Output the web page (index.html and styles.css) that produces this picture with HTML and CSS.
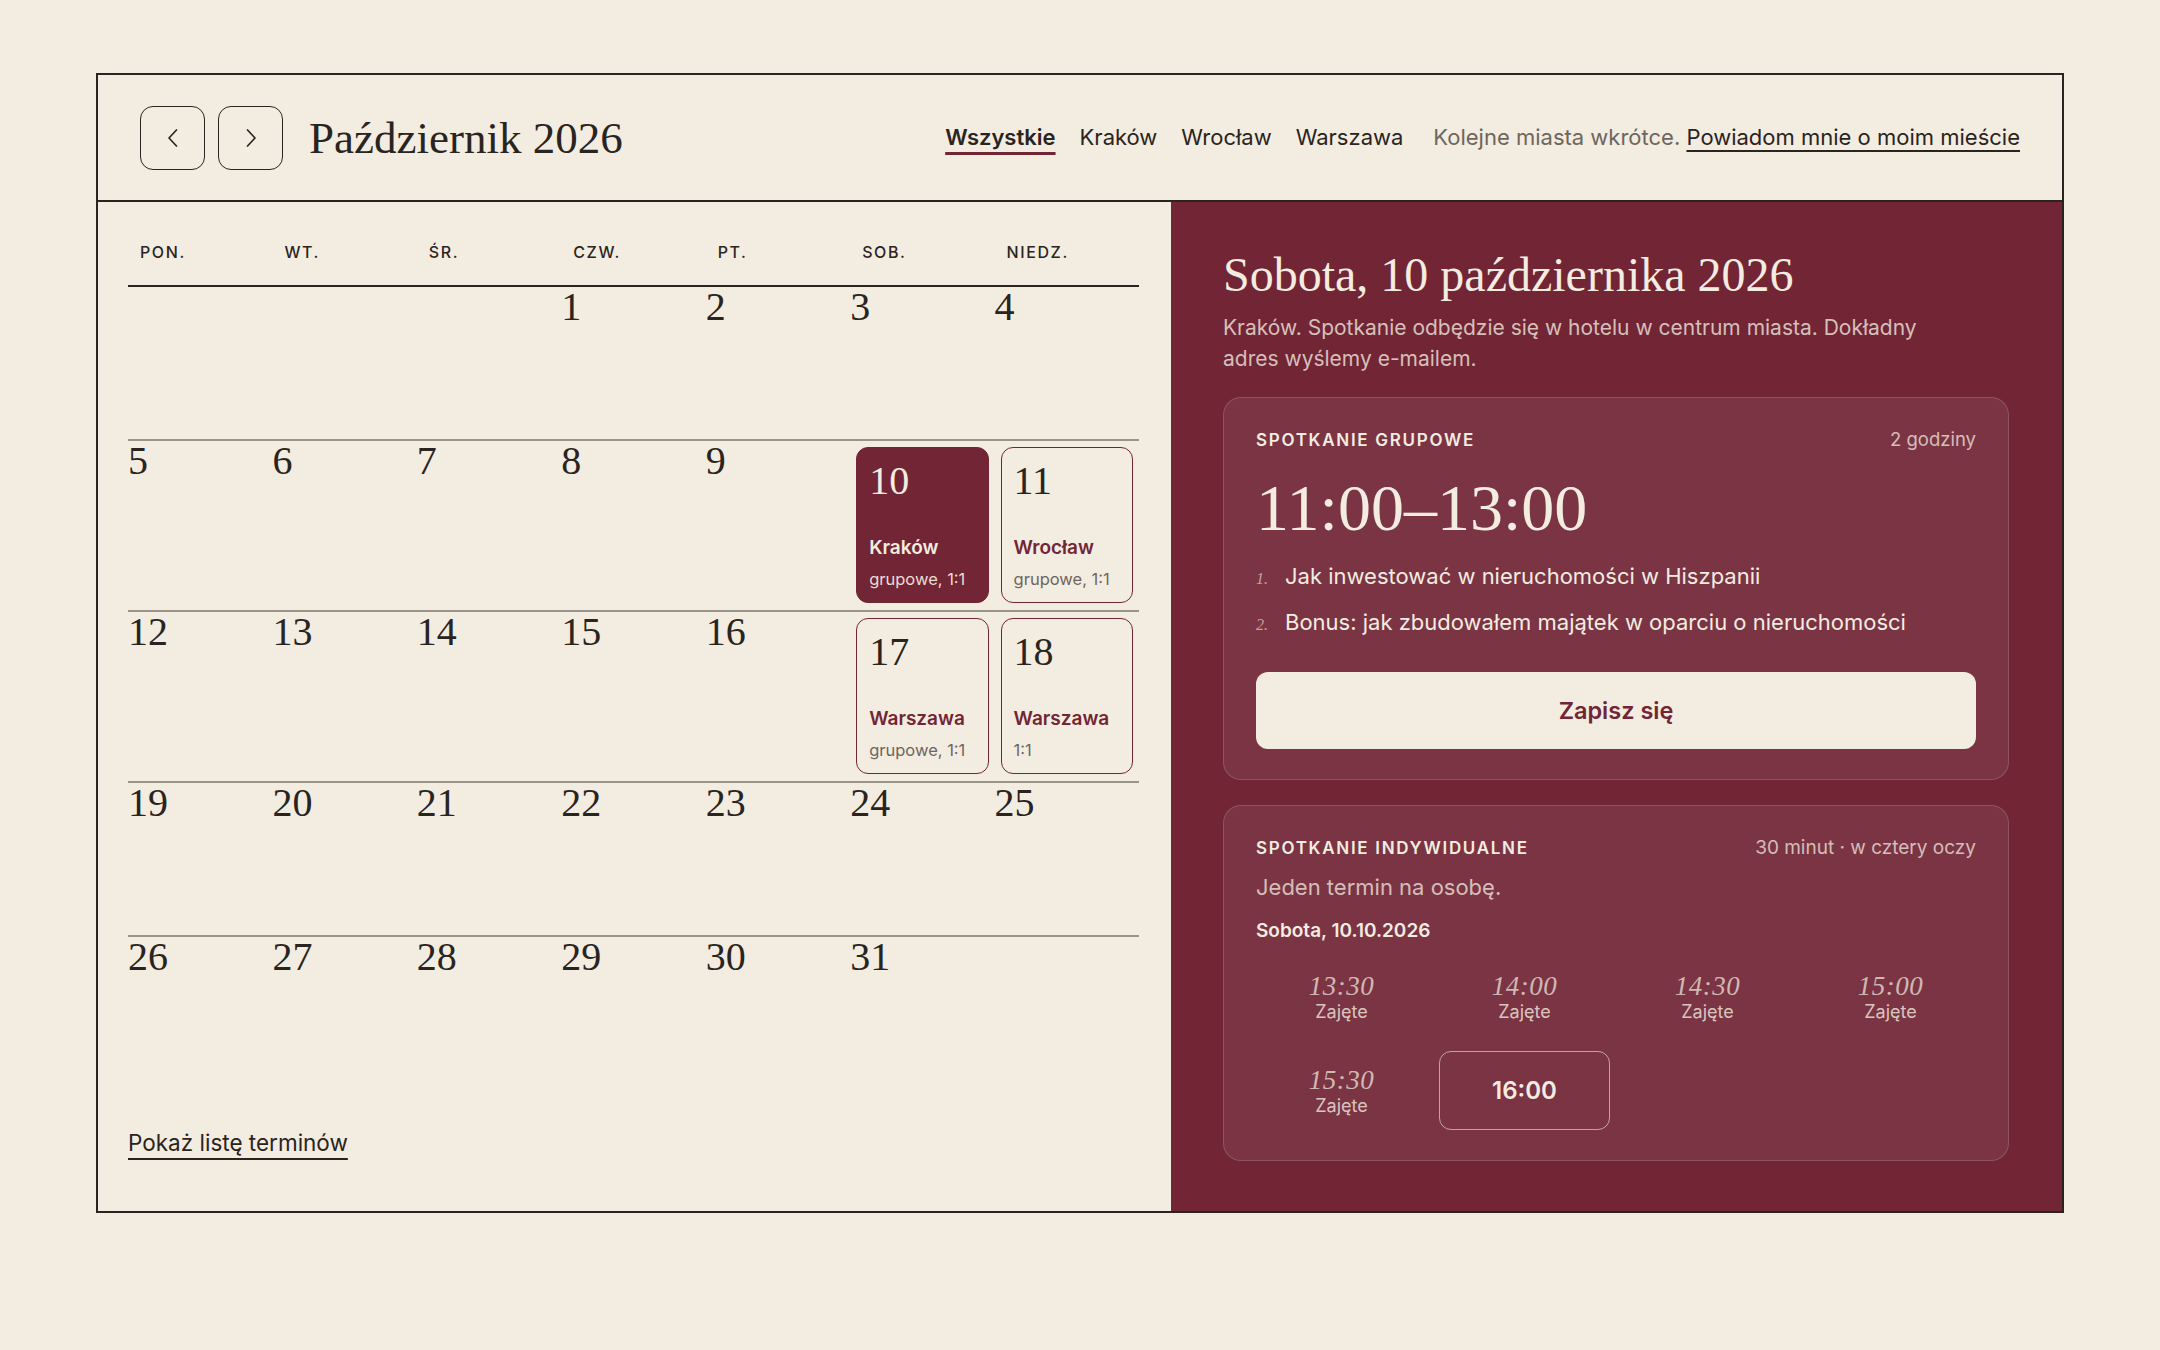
FILE: index.html
```html
<!DOCTYPE html>
<html lang="pl">
<head>
<meta charset="utf-8">
<title>Październik 2026</title>
<link rel="stylesheet" href="styles.css">
</head>
<body>
<div class="page">
  <section class="card">
    <header class="top">
      <button class="nav-btn" aria-label="Poprzedni miesiąc">
        <svg width="20" height="20" viewBox="0 0 20 20"><path d="M13.5 2 L6 10 L13.5 18" fill="none" stroke="#2a2420" stroke-width="1.7" stroke-linecap="round" stroke-linejoin="round"/></svg>
      </button>
      <button class="nav-btn" aria-label="Następny miesiąc">
        <svg width="20" height="20" viewBox="0 0 20 20"><path d="M6.5 2 L14 10 L6.5 18" fill="none" stroke="#2a2420" stroke-width="1.7" stroke-linecap="round" stroke-linejoin="round"/></svg>
      </button>
      <h1 class="month">Październik 2026</h1>
      <nav class="tabs">
        <a class="tab active">Wszystkie</a>
        <a class="tab">Kraków</a>
        <a class="tab">Wrocław</a>
        <a class="tab">Warszawa</a>
        <span class="soon">Kolejne miasta wkrótce. <a class="notify">Powiadom mnie o moim mieście</a></span>
      </nav>
    </header>

    <div class="body">
      <div class="cal">
        <div class="weekdays">
          <div>PON.</div><div>WT.</div><div>ŚR.</div><div>CZW.</div><div>PT.</div><div>SOB.</div><div>NIEDZ.</div>
        </div>
        <div class="grid">
          <div class="cell"></div>
          <div class="cell"></div>
          <div class="cell"></div>
          <div class="cell"><span class="num">1</span></div>
          <div class="cell"><span class="num">2</span></div>
          <div class="cell"><span class="num">3</span></div>
          <div class="cell"><span class="num">4</span></div>

          <div class="cell"><span class="num">5</span></div>
          <div class="cell"><span class="num">6</span></div>
          <div class="cell"><span class="num">7</span></div>
          <div class="cell"><span class="num">8</span></div>
          <div class="cell"><span class="num">9</span></div>
          <div class="cell ev">
            <div class="ev-box selected">
              <span class="num">10</span>
              <span class="city">Kraków</span>
              <span class="type">grupowe, 1:1</span>
            </div>
          </div>
          <div class="cell ev">
            <div class="ev-box">
              <span class="num">11</span>
              <span class="city">Wrocław</span>
              <span class="type">grupowe, 1:1</span>
            </div>
          </div>

          <div class="cell"><span class="num">12</span></div>
          <div class="cell"><span class="num">13</span></div>
          <div class="cell"><span class="num">14</span></div>
          <div class="cell"><span class="num">15</span></div>
          <div class="cell"><span class="num">16</span></div>
          <div class="cell ev">
            <div class="ev-box">
              <span class="num">17</span>
              <span class="city">Warszawa</span>
              <span class="type">grupowe, 1:1</span>
            </div>
          </div>
          <div class="cell ev">
            <div class="ev-box">
              <span class="num">18</span>
              <span class="city">Warszawa</span>
              <span class="type">1:1</span>
            </div>
          </div>

          <div class="cell"><span class="num">19</span></div>
          <div class="cell"><span class="num">20</span></div>
          <div class="cell"><span class="num">21</span></div>
          <div class="cell"><span class="num">22</span></div>
          <div class="cell"><span class="num">23</span></div>
          <div class="cell"><span class="num">24</span></div>
          <div class="cell"><span class="num">25</span></div>

          <div class="cell"><span class="num">26</span></div>
          <div class="cell"><span class="num">27</span></div>
          <div class="cell"><span class="num">28</span></div>
          <div class="cell"><span class="num">29</span></div>
          <div class="cell"><span class="num">30</span></div>
          <div class="cell"><span class="num">31</span></div>
          <div class="cell"></div>
        </div>
        <div class="foot"><a class="list-link">Pokaż listę terminów</a></div>
      </div>

      <aside class="detail">
        <h2 class="day-title">Sobota, 10 października 2026</h2>
        <p class="day-sub">Kraków. Spotkanie odbędzie się w hotelu w centrum miasta. Dokładny adres wyślemy e-mailem.</p>

        <div class="box group">
          <div class="box-head">
            <span class="label">Spotkanie grupowe</span>
            <span class="meta">2 godziny</span>
          </div>
          <div class="time-range">11:00–13:00</div>
          <ol class="topics">
            <li><span class="n">1.</span><span>Jak inwestować w nieruchomości w Hiszpanii</span></li>
            <li><span class="n">2.</span><span>Bonus: jak zbudowałem majątek w oparciu o nieruchomości</span></li>
          </ol>
          <button class="cta">Zapisz się</button>
        </div>

        <div class="box single">
          <div class="box-head">
            <span class="label">Spotkanie indywidualne</span>
            <span class="meta">30 minut · w cztery oczy</span>
          </div>
          <p class="note">Jeden termin na osobę.</p>
          <p class="date">Sobota, 10.10.2026</p>
          <div class="slots">
            <div class="slot"><span class="t">13:30</span><span class="s">Zajęte</span></div>
            <div class="slot"><span class="t">14:00</span><span class="s">Zajęte</span></div>
            <div class="slot"><span class="t">14:30</span><span class="s">Zajęte</span></div>
            <div class="slot"><span class="t">15:00</span><span class="s">Zajęte</span></div>
            <div class="slot"><span class="t">15:30</span><span class="s">Zajęte</span></div>
            <button class="slot free">16:00</button>
          </div>
        </div>
      </aside>
    </div>
  </section>
</div>
</body>
</html>
```

FILE: styles.css
```css
* { box-sizing: border-box; margin: 0; padding: 0; }

body {
  background: #f3ece0;
  color: #2a2420;
  font-family: Inter, "Noto Sans", sans-serif;
}

.page { padding: 73px 96px; }

.card {
  border: 2px solid #2a2420;
  background: #f3ece0;
}

/* header */
.top {
  display: flex;
  align-items: center;
  height: 127px;
  border-bottom: 2px solid #2a2420;
  padding: 0 42px;
}

.nav-btn {
  width: 65px;
  height: 64px;
  border: 1.5px solid #2a2420;
  border-radius: 13px;
  background: transparent;
  display: flex;
  align-items: center;
  justify-content: center;
}
.nav-btn + .nav-btn { margin-left: 13px; }

.month {
  margin-left: 26px;
  font-family: "Liberation Serif", serif;
  font-weight: 400;
  font-size: 45px;
  line-height: 1.2;
  color: #2a2420;
}

.tabs {
  margin-left: auto;
  display: flex;
  align-items: baseline;
  gap: 24px;
  font-size: 22px;
  line-height: 1.2;
}
.tab { color: #2a2420; }
.tab.active {
  font-weight: 600;
  text-decoration: underline;
  text-decoration-color: #722535;
  text-decoration-thickness: 3px;
  text-underline-offset: 7px;
}
.soon { margin-left: 6px; color: #6e665e; }
.notify {
  color: #2a2420;
  text-decoration: underline;
  text-decoration-thickness: 2px;
  text-underline-offset: 5px;
}

/* body */
.body {
  display: grid;
  grid-template-columns: 1073px 1fr;
}

.cal {
  display: flex;
  flex-direction: column;
  padding: 32px 32px 52px 30px;
}

.weekdays {
  display: grid;
  grid-template-columns: repeat(7, 1fr);
  padding: 6px 0 21px;
  font-size: 16px;
  font-weight: 500;
  letter-spacing: 0.1em;
  line-height: 24px;
}
.weekdays div { padding-left: 12px; }

.grid {
  display: grid;
  grid-template-columns: repeat(7, 1fr);
  grid-auto-rows: minmax(154px, auto);
}
.cell { border-top: 2px solid #9b9389; }
.grid .cell:nth-child(-n+7) { border-top-color: #2a2420; }

.num {
  display: block;
  font-family: "Liberation Serif", serif;
  font-size: 40px;
  line-height: 40px;
  color: #2a2420;
}

.cell.ev { padding: 6px 6px 7px; }
.ev-box {
  display: flex;
  flex-direction: column;
  border: 1.5px solid #722535;
  border-radius: 12px;
  padding: 13px 12px 12px;
}
.ev-box .city {
  margin-top: 34px;
  font-size: 19px;
  font-weight: 600;
  line-height: 25px;
  color: #722535;
}
.ev-box .type {
  margin-top: 8px;
  font-size: 16.5px;
  line-height: 22px;
  color: #6e665e;
}
.ev-box.selected { background: #722535; }
.ev-box.selected .num,
.ev-box.selected .city { color: #f3ece0; }
.ev-box.selected .type { color: #eadcd6; }

.foot { margin-top: auto; padding-top: 35px; }
.list-link {
  display: inline-block;
  font-size: 22.5px;
  line-height: 32px;
  color: #2a2420;
  text-decoration: underline;
  text-decoration-thickness: 2px;
  text-underline-offset: 7px;
}

/* detail panel */
.detail {
  background: #722535;
  color: #f3ece0;
  padding: 44px 53px 50px 52px;
}
.day-title {
  font-family: "Liberation Serif", serif;
  font-weight: 400;
  font-size: 48px;
  line-height: 1.2;
}
.day-sub {
  margin-top: 8px;
  max-width: 745px;
  font-size: 21px;
  line-height: 31px;
  color: rgba(243, 236, 224, 0.78);
}

.box {
  margin-top: 23px;
  background: rgba(255, 255, 255, 0.07);
  border: 1.5px solid rgba(255, 255, 255, 0.15);
  border-radius: 18px;
  padding: 30px 32px;
}
.box + .box { margin-top: 25px; }

.box-head {
  display: flex;
  justify-content: space-between;
  align-items: baseline;
}
.label {
  font-size: 17px;
  font-weight: 600;
  letter-spacing: 0.1em;
  line-height: 24px;
  text-transform: uppercase;
}
.meta {
  font-size: 18.5px;
  color: rgba(243, 236, 224, 0.75);
}
.single .meta { font-size: 19px; }

.time-range {
  margin-top: 20px;
  font-family: "Liberation Serif", serif;
  font-size: 66px;
  line-height: 1.1;
}

.topics { list-style: none; margin-top: 16px; }
.topics li {
  display: flex;
  align-items: baseline;
  font-size: 22px;
  line-height: 32px;
}
.topics li + li { margin-top: 11px; }
.topics .n {
  width: 29px;
  flex: none;
  font-family: "Liberation Serif", serif;
  font-style: italic;
  font-size: 16px;
  color: rgba(243, 236, 224, 0.6);
}

.cta {
  display: block;
  width: 100%;
  height: 77px;
  margin-top: 31px;
  border: none;
  border-radius: 12px;
  background: #f3ece0;
  color: #722535;
  font-family: Inter, "Noto Sans", sans-serif;
  font-size: 23.5px;
  font-weight: 600;
}

.note {
  margin-top: 12px;
  font-size: 22px;
  line-height: 30px;
  color: rgba(243, 236, 224, 0.75);
}
.date {
  margin-top: 17px;
  font-size: 19px;
  font-weight: 600;
  line-height: 24px;
}

.slots {
  margin-top: 14px;
  display: grid;
  grid-template-columns: repeat(4, 1fr);
  grid-auto-rows: 79px;
  gap: 15px 12px;
}
.slot {
  display: flex;
  flex-direction: column;
  align-items: center;
  justify-content: center;
  color: rgba(243, 236, 224, 0.72);
}
.slot .t {
  font-family: "Liberation Serif", serif;
  font-style: italic;
  font-size: 27px;
  line-height: 30px;
  letter-spacing: 0.02em;
}
.slot .s {
  font-size: 18px;
  line-height: 22px;
  color: rgba(243, 236, 224, 0.8);
}
.slot.free {
  background: transparent;
  border: 1.5px solid rgba(243, 236, 224, 0.6);
  border-radius: 12px;
  color: #f3ece0;
  font-family: Inter, "Noto Sans", sans-serif;
  font-size: 24px;
  font-weight: 600;
}
```
